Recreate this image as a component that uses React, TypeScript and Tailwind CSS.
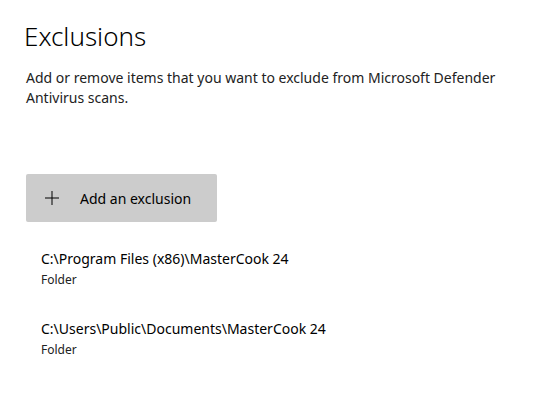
export default function App() {
  const items = [
    "C:\\Program Files (x86)\\MasterCook 24",
    "C:\\Users\\Public\\Documents\\MasterCook 24",
  ];
  return (
    <div
      className="w-[542px] h-[414px] bg-white text-black overflow-hidden"
      style={{ fontFamily: '"Segoe UI", "Noto Sans", sans-serif' }}
    >
      <div className="pl-[24px] pt-[16px]">
        <h1 className="text-[26px] font-light leading-[40px]">Exclusions</h1>
        <p className="mt-[12px] pl-[2px] pr-[20px] text-[14px] leading-[20px] text-[#222]">
          Add or remove items that you want to exclude from Microsoft Defender Antivirus scans.
        </p>
        <button className="mt-[66px] ml-[2px] w-[191px] h-[48px] bg-[#cccccc] rounded-[2px] flex items-center pl-[18px]">
          <svg width="16" height="16" viewBox="0 0 16 16" className="shrink-0">
            <path d="M8 1v14M1 8h14" stroke="#000" strokeWidth="1" fill="none" />
          </svg>
          <span className="ml-[20px] text-[14px]">Add an exclusion</span>
        </button>
        <div className="mt-[26px] pl-[17px] flex flex-col gap-[30px]">
          {items.map((it) => (
            <div key={it} className="flex flex-col">
              <span className="text-[14px] leading-[22px]">{it}</span>
              <span className="mt-[2px] text-[12px] leading-[16px] text-[#222]">Folder</span>
            </div>
          ))}
        </div>
      </div>
    </div>
  );
}
